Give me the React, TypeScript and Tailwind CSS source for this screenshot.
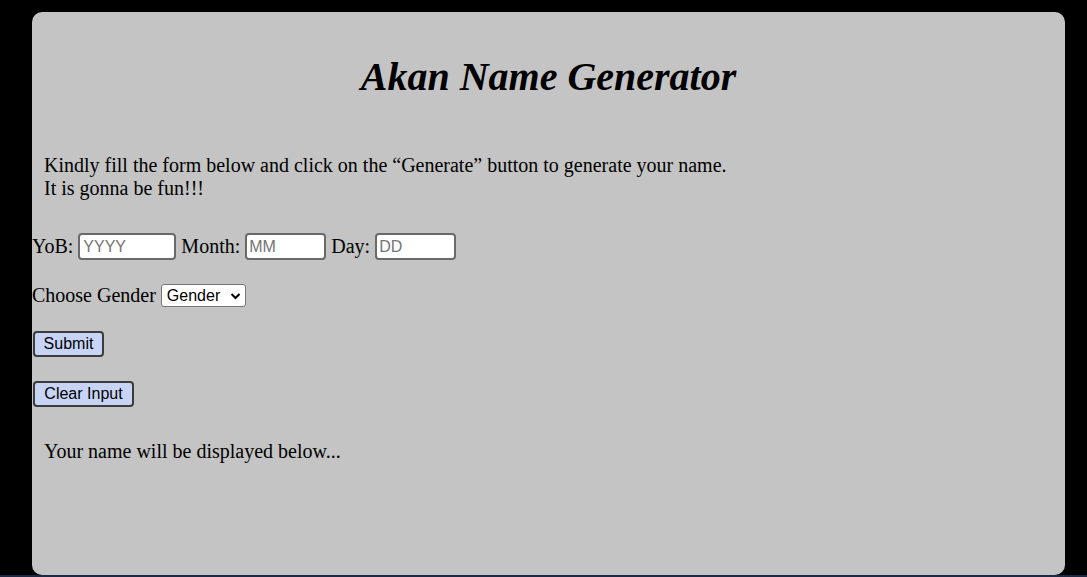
import React from "react";

export default function App() {
  const serif = { fontFamily: '"Liberation Serif", "Times New Roman", serif' };
  const sans = { fontFamily: '"Liberation Sans", Arial, sans-serif' };
  return (
    <div className="w-[1087px] h-[577px] bg-black flex flex-col overflow-hidden" style={serif}>
      <div className="ml-[32px] mt-[12px] w-[1033px] h-[563px] bg-[#c4c4c4] rounded-[10px] flex flex-col text-black">
        <h1 className="mt-[42px] text-[40px] leading-[46px] font-bold italic text-center">Akan Name Generator</h1>
        <p className="mt-[54px] ml-[12px] text-[20px] leading-[23px]">
          Kindly fill the form below and click on the “Generate” button to generate your name.
          <br />
          It is gonna be fun!!!
        </p>
        <div className="mt-[33px] flex items-center gap-[5px] text-[20px] leading-[23px] h-[27px]">
          <span>YoB:</span>
          <input
            placeholder="YYYY"
            className="w-[98px] h-[27px] bg-white border-2 border-[#6a6a6a] rounded-[4px] px-[3px] text-[16px] text-black placeholder:text-[#757575] outline-none"
            style={sans}
          />
          <span>Month:</span>
          <input
            placeholder="MM"
            className="w-[81px] h-[27px] bg-white border-2 border-[#6a6a6a] rounded-[4px] px-[2px] text-[16px] text-black placeholder:text-[#757575] outline-none"
            style={sans}
          />
          <span>Day:</span>
          <input
            placeholder="DD"
            className="w-[81px] h-[27px] bg-white border-2 border-[#6a6a6a] rounded-[4px] px-[2px] text-[16px] text-black placeholder:text-[#757575] outline-none"
            style={sans}
          />
        </div>
        <div className="mt-[24px] flex items-center gap-[5px] text-[20px] leading-[23px] h-[23px]">
          <span>Choose Gender</span>
          <div
            className="w-[85px] h-[23px] bg-white border border-[#767676] rounded-[3px] flex items-center pl-[5px] pr-[4px] text-[16px] justify-between"
            style={sans}
          >
            <span>Gender</span>
            <svg width="11" height="8" viewBox="0 0 11 8" fill="none">
              <path d="M1.5 2L5.5 6L9.5 2" stroke="black" strokeWidth="2" />
            </svg>
          </div>
        </div>
        <div className="mt-[24px] ml-[1px] flex">
          <button
            className="w-[71px] h-[26px] bg-[#c7d4f5] border-2 border-[#3c3c3c] rounded-[4px] text-[16px] leading-none"
            style={sans}
          >
            Submit
          </button>
        </div>
        <div className="mt-[24px] ml-[1px] flex">
          <button
            className="w-[101px] h-[26px] bg-[#c7d4f5] border-2 border-[#3c3c3c] rounded-[4px] text-[16px] leading-none"
            style={sans}
          >
            Clear Input
          </button>
        </div>
        <p className="mt-[33px] ml-[12px] text-[20px] leading-[23px]">Your name will be displayed below...</p>
      </div>
      <div className="h-[2px] bg-[#1b2a45]" />
    </div>
  );
}
